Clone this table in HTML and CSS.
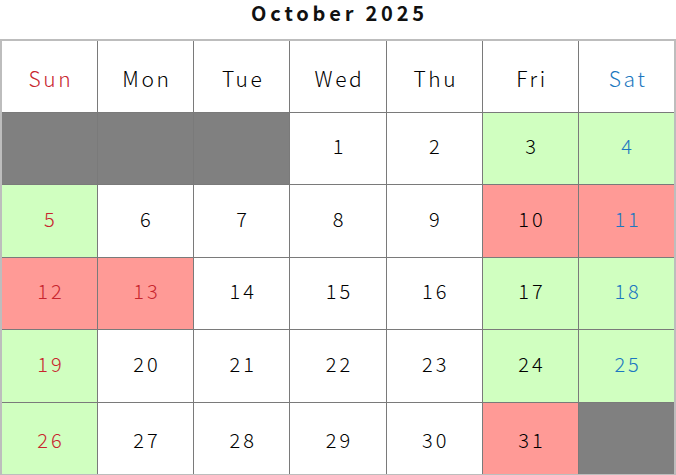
FILE: index.html
```html
<!DOCTYPE html>
<html>
<head>
<meta charset="utf-8">
<link rel="stylesheet" href="styles.css">
</head>
<body>
<div class="title">October 2025</div>
<table class="cal">
<thead>
<tr><th class="sun">Sun</th><th>Mon</th><th>Tue</th><th>Wed</th><th>Thu</th><th>Fri</th><th class="sat">Sat</th></tr>
</thead>
<tbody>
<tr><td class="off"></td><td class="off"></td><td class="off"></td><td>1</td><td>2</td><td class="g">3</td><td class="g sat">4</td></tr>
<tr><td class="g sun">5</td><td>6</td><td>7</td><td>8</td><td>9</td><td class="r">10</td><td class="r sat">11</td></tr>
<tr><td class="r sun">12</td><td class="r sun">13</td><td>14</td><td>15</td><td>16</td><td class="g">17</td><td class="g sat">18</td></tr>
<tr><td class="g sun">19</td><td>20</td><td>21</td><td>22</td><td>23</td><td class="g">24</td><td class="g sat">25</td></tr>
<tr class="last"><td class="g sun">26</td><td>27</td><td>28</td><td>29</td><td>30</td><td class="r">31</td><td class="off"></td></tr>
</tbody>
</table>
</body>
</html>
```
FILE: styles.css
```css
html, body {
  margin: 0;
  padding: 0;
  background: #fff;
}
body {
  font-family: "Noto Sans CJK JP", "Noto Sans", sans-serif;
  color: #111;
}
.title {
  height: 39px;
  padding-top: 1px;
  box-sizing: border-box;
  line-height: 24px;
  text-align: center;
  font-weight: bold;
  font-size: 20px;
  letter-spacing: 3.8px;
  padding-left: 3px;
  color: #111;
}
.cal {
  width: 676px;
  border-collapse: collapse;
  table-layout: fixed;
  border: 2px solid #bdbdbd;
}
.cal thead tr {
  height: 72px;
}
.cal tbody tr {
  height: 72.6px;
}
.cal th, .cal td {
  border: 1px solid #7a7a7a;
  text-align: center;
  vertical-align: middle;
  font-weight: 300;
  padding: 0 0 0 3px;
  line-height: 1;
  color: #000;
}
.cal th {
  font-size: 21px;
  letter-spacing: 2.6px;
  padding-top: 4px;
}
.cal td {
  font-size: 20px;
  letter-spacing: 3px;
  padding-bottom: 4px;
}
.cal .last td {
  padding-top: 4px;
  padding-bottom: 0;
}
.cal .sun { color: #c8252e; }
.cal .sat { color: #1c78c0; }
.cal .off { background: #808080; }
.cal .g { background: #d0ffc0; }
.cal .r { background: #ff9a96; }
```
